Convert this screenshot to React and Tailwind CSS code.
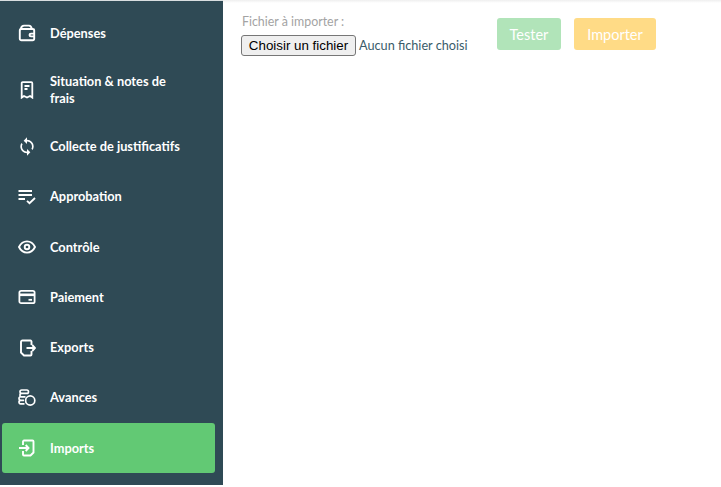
import { MdSync } from 'react-icons/md';

const WalletIcon = () => (
  <svg width="18" height="18" viewBox="0 0 18 18" fill="none" stroke="currentColor" strokeWidth="1.9">
    <path d="M1.8 6.5C1.8 5.5 2.6 5 3.4 5H14.6C15.6 5 16.2 5.7 16.2 6.5V14.7C16.2 15.6 15.5 16.2 14.6 16.2H3.4C2.5 16.2 1.8 15.6 1.8 14.7Z" />
    <path d="M2.8 5C3.2 2.8 4.6 1.6 6 1.6H11C12.4 1.6 13.4 2.8 13.8 5" />
    <path d="M16 9.6H13C12 9.6 11.5 10.3 11.5 11C11.5 11.7 12 12.4 13 12.4H16" />
  </svg>
);

const ReceiptIcon = () => (
  <svg width="18" height="18" viewBox="0 0 18 18" fill="none" stroke="currentColor" strokeWidth="1.8">
    <path d="M3.7 16.6V2.2C3.7 1.6 4.1 1.2 4.7 1.2H13.3C13.9 1.2 14.3 1.6 14.3 2.2V16.6L12 15L9 16.6L6 15Z" />
    <path d="M6.5 5H11.5M6.5 8H9.5" />
  </svg>
);

const ListCheckIcon = () => (
  <svg width="18" height="18" viewBox="0 0 18 18" fill="none" stroke="currentColor" strokeWidth="1.8">
    <path d="M0.5 3H14M0.5 7H14M0.5 11H7" />
    <path d="M9 12.8L11.5 15.2L17 10" />
  </svg>
);

const EyeIcon = () => (
  <svg width="18" height="18" viewBox="0 0 18 18" fill="none" stroke="currentColor" strokeWidth="1.9">
    <path d="M1 9C2.8 5.3 5.8 3.4 9 3.4S15.2 5.3 17 9C15.2 12.7 12.2 14.6 9 14.6S2.8 12.7 1 9Z" />
    <circle cx="9" cy="9" r="2.3" />
  </svg>
);

const CardIcon = () => (
  <svg width="18" height="18" viewBox="0 0 18 18" fill="none" stroke="currentColor" strokeWidth="1.8">
    <rect x="1.4" y="2.8" width="15.2" height="12.4" rx="1.8" />
    <path d="M1.4 6.8H16.6" strokeWidth="2.6" />
    <path d="M10.5 11.8H14" />
  </svg>
);

const ExportIcon = () => (
  <svg width="18" height="18" viewBox="0 0 18 18" fill="none" stroke="currentColor" strokeWidth="1.9">
    <path d="M13.5 6V2.5C13.5 2 13 1.5 12.5 1.5H4.5C3.7 1.5 3 2.2 3 3V13.5L6 16.5H12.5C13 16.5 13.5 16 13.5 15.5V12" />
    <path d="M8.5 9H17M14.2 6L17 9L14.2 12" />
  </svg>
);

const AdvanceIcon = () => (
  <svg width="18" height="18" viewBox="0 0 18 18" fill="none" stroke="currentColor" strokeWidth="1.7">
    <rect x="2" y="1" width="8.5" height="3.4" rx="1.7" />
    <path d="M7.5 7.8H3.4C2.5 7.8 1.9 7.1 1.9 6.1C1.9 5.1 2.6 4.4 3.4 4.4" />
    <path d="M6 11.3H2.6C1.7 11.3 1 10.6 1 9.5C1 8.5 1.7 7.8 2.6 7.8" />
    <path d="M6.5 14.8H2.6C1.7 14.8 1 14.1 1 13C1 12 1.7 11.3 2.6 11.3" />
    <circle cx="12.2" cy="11.5" r="4.6" />
  </svg>
);

const ImportIcon = () => (
  <svg width="18" height="18" viewBox="0 0 18 18" fill="none" stroke="currentColor" strokeWidth="1.9">
    <path d="M5 6V2.5C5 2 5.5 1.5 6 1.5H14.5C15.2 1.5 15.5 2 15.5 2.5V13.5L12.5 16.5H6C5.5 16.5 5 16 5 15.5V12" />
    <path d="M1 9H10.5M7.7 6L10.5 9L7.7 12" />
  </svg>
);

const items = [
  { label: 'Dépenses', icon: <WalletIcon />, h: 'h-[50.3px]' },
  { label: 'Situation & notes de frais', icon: <ReceiptIcon />, h: 'h-[63px]' },
  { label: 'Collecte de justificatifs', icon: <MdSync size={21} />, h: 'h-[50.3px]' },
  { label: 'Approbation', icon: <ListCheckIcon />, h: 'h-[50.3px]' },
  { label: 'Contrôle', icon: <EyeIcon />, h: 'h-[50.3px]' },
  { label: 'Paiement', icon: <CardIcon />, h: 'h-[50.3px]' },
  { label: 'Exports', icon: <ExportIcon />, h: 'h-[50.3px]' },
  { label: 'Avances', icon: <AdvanceIcon />, h: 'h-[50.3px]' },
  { label: 'Imports', icon: <ImportIcon />, h: 'h-[50.3px]', active: true },
];

const App = () => {
  return (
    <div className="flex h-[487px] w-[721px] overflow-hidden bg-white font-['Lato',sans-serif]">
      {/* Sidebar */}
      <aside className="flex h-[485px] w-[223px] shrink-0 flex-col border-t border-[#d9dee0] bg-[#2f4a55] pl-[2px] pr-[8px] pt-[7px]">
        {items.map((item) => (
          <div
            key={item.label}
            className={`flex items-center rounded-[3px] pl-[15px] text-white ${item.h} ${item.active ? 'bg-[#62c974]' : ''}`}
          >
            <span className="flex w-[20px] shrink-0 justify-center">{item.icon}</span>
            <span className="ml-[13px] pr-[30px] text-[12.8px] leading-[17px] font-bold">{item.label}</span>
          </div>
        ))}
      </aside>

      {/* Main */}
      <main className="h-full flex-1 bg-white">
        <div className="h-[3px] bg-gradient-to-b from-[#efefef] to-white" />
        <div className="flex pl-[18px] pt-[11px]">
          <div className="w-[256px]">
            <div className="pl-[1px] text-[12.4px] leading-[16px] text-[#a3a3a3]">Fichier à importer :</div>
            <div className="mt-[5px] flex items-center">
              <button className="h-[21px] w-[115px] rounded-[3px] border border-[#767676] bg-[#efefef] font-['Liberation_Sans',sans-serif] text-[13.33px] leading-none text-black">
                Choisir un fichier
              </button>
              <span className="ml-[3px] text-[12.7px] text-[#3a5c6a]">Aucun fichier choisi</span>
            </div>
          </div>
          <button className="mt-[4px] h-[32px] w-[64px] rounded-[3px] bg-[#b1e4b9] pt-[1px] text-[14.5px] text-white">Tester</button>
          <button className="ml-[13px] mt-[4px] h-[32px] w-[82px] rounded-[3px] bg-[#ffdb86] pt-[1px] text-[14.5px] text-white">Importer</button>
        </div>
      </main>
    </div>
  );
};

export default App;
